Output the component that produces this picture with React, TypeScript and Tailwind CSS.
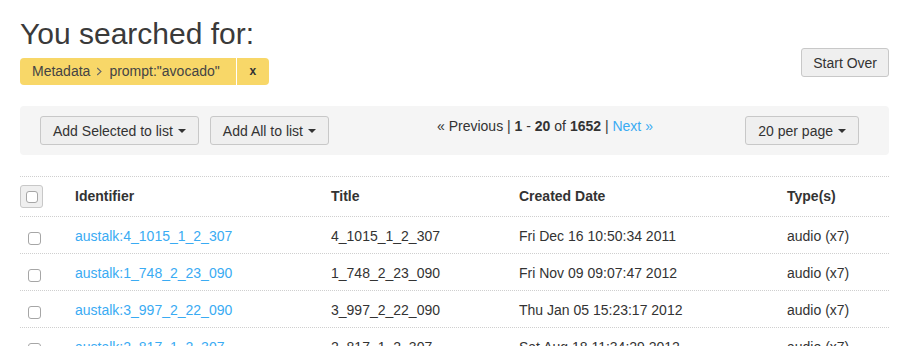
import React from "react";

const rows = [
  ["austalk:4_1015_1_2_307", "4_1015_1_2_307", "Fri Dec 16 10:50:34 2011", "audio (x7)"],
  ["austalk:1_748_2_23_090", "1_748_2_23_090", "Fri Nov 09 09:07:47 2012", "audio (x7)"],
  ["austalk:3_997_2_22_090", "3_997_2_22_090", "Thu Jan 05 15:23:17 2012", "audio (x7)"],
  ["austalk:2_817_1_2_307", "2_817_1_2_307", "Sat Aug 18 11:34:29 2012", "audio (x7)"],
];

function Caret() {
  return (
    <span className="inline-block w-0 h-0 ml-[5px] border-x-[4px] border-x-transparent border-t-[4px] border-t-[#333] align-middle" />
  );
}

function Btn({ children, px = "px-[12px]" }: { children: React.ReactNode; px?: string }) {
  return (
    <div className={`h-[29px] flex items-center ${px} border border-[#c8c8c8] rounded-[3px] bg-[#efefef] text-[14px] text-[#333] leading-[20px] whitespace-nowrap`}>
      {children}
    </div>
  );
}

function Check() {
  return <span className="block w-[13px] h-[13px] rounded-[3px] border border-[#a6a6a6] bg-white" />;
}

export default function App() {
  return (
    <div
      className="w-[898px] h-[346px] overflow-hidden bg-white text-[#333] px-[20px]"
      style={{ fontFamily: '"Liberation Sans", Arial, sans-serif' }}
    >
      <div className="flex justify-between items-start w-[869px]">
        <div>
          <h1 className="pt-[17px] text-[30px] leading-[33px] font-light text-[#3a3a3a]">
            You searched for:
          </h1>
          <div className="mt-[8px] flex h-[27px] rounded-[4px] overflow-hidden bg-[#f8d768] text-[14px] text-[#444]">
            <div className="flex items-center pl-[12px] pr-[16px]">
              <span>Metadata</span>
              <svg width="7" height="9" viewBox="0 0 7 9" className="mx-[6px]">
                <path d="M1.2 1 L5 4.5 L1.2 8" fill="none" stroke="#666" strokeWidth="1.1" />
              </svg>
              <span>prompt:"avocado"</span>
            </div>
            <div className="w-[1px] bg-white" />
            <div className="w-[32px] flex items-center justify-center text-[12px] font-bold text-[#333] leading-none pb-[2px]">
              x
            </div>
          </div>
        </div>
        <div className="mt-[48px]">
          <Btn px="px-[11px]">Start Over</Btn>
        </div>
      </div>

      <div className="mt-[21px] w-[869px] h-[49px] bg-[#f5f5f5] rounded-[4px] flex items-start pt-[10px] pl-[20px] pr-[30px]">
        <Btn>
          Add Selected to list
          <Caret />
        </Btn>
        <div className="ml-[11px]">
          <Btn>
            Add All to list
            <Caret />
          </Btn>
        </div>
        <div className="ml-[108px] text-[14px] leading-[20px] whitespace-nowrap text-[#333]">
          « Previous | <b>1</b> - <b>20</b> of <b>1652</b> | <span className="text-[#3aabf3]">Next »</span>
        </div>
        <div className="ml-auto">
          <Btn>
            20 per page
            <Caret />
          </Btn>
        </div>
      </div>

      <div className="mt-[21px] w-[869px] border-t border-dotted border-[#cfcfcf] text-[14px]">
        <div className="grid grid-cols-[55px_256px_188px_268px_1fr] h-[40px] items-center border-b border-dotted border-[#cfcfcf] font-bold">
          <div>
            <div className="w-[23px] h-[23px] rounded-[3px] border border-[#c8c8c8] bg-[#efefef] flex items-center justify-center">
              <span className="block w-[12px] h-[12px] rounded-[3px] border border-[#a6a6a6] bg-white" />
            </div>
          </div>
          <div>Identifier</div>
          <div>Title</div>
          <div>Created Date</div>
          <div>Type(s)</div>
        </div>
        {rows.map((r) => (
          <div
            key={r[0]}
            className="grid grid-cols-[55px_256px_188px_268px_1fr] h-[37px] items-center border-b border-dotted border-[#cfcfcf]"
          >
            <div className="pl-[8px] pt-[6px]">
              <Check />
            </div>
            <div className="text-[#3aabf3] pt-[2px]">{r[0]}</div>
            <div className="pt-[2px]">{r[1]}</div>
            <div className="pt-[2px]">{r[2]}</div>
            <div className="pt-[2px]">{r[3]}</div>
          </div>
        ))}
      </div>
    </div>
  );
}
